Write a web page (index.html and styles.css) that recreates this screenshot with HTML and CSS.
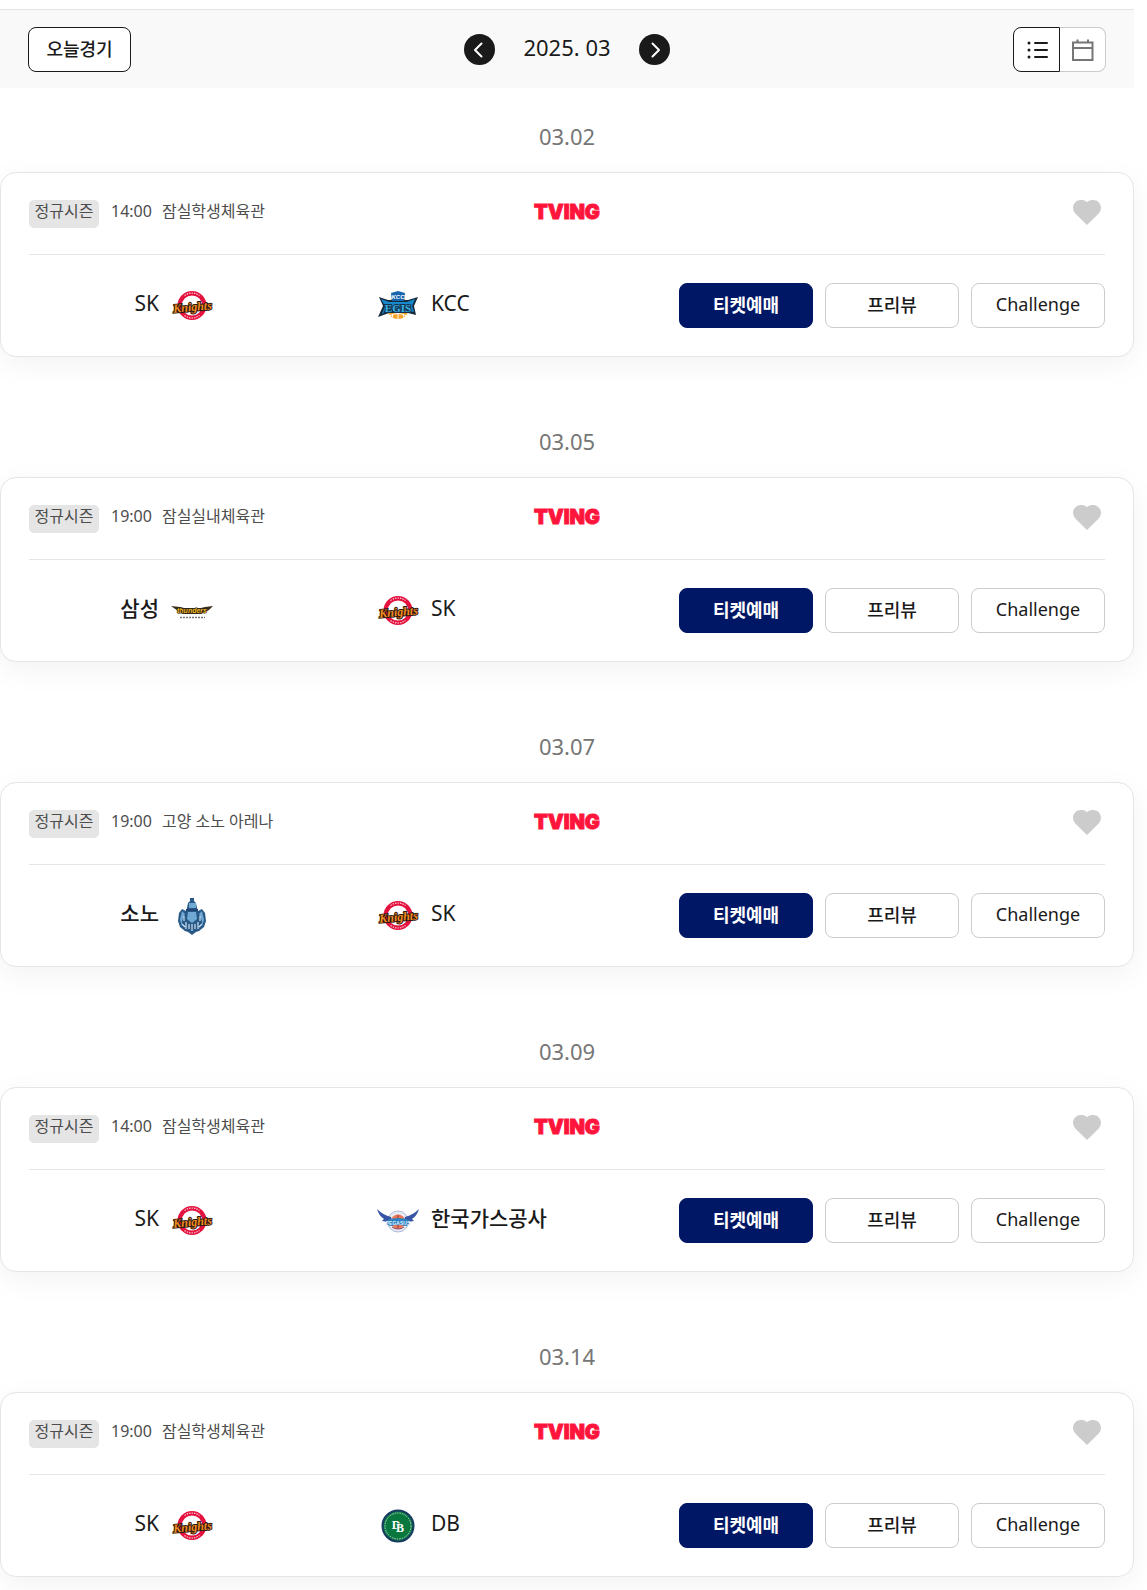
FILE: index.html
```html
<!DOCTYPE html>
<html lang="ko">
<head>
<meta charset="utf-8">
<meta name="viewport" content="width=device-width, initial-scale=1">
<title>경기일정</title>
<link rel="stylesheet" href="styles.css">
</head>
<body>
<svg class="sprite" aria-hidden="true">
  <symbol id="heart" viewBox="0 0 28 25"><path d="M14 25 2.300 13.400A8 8 0 0 1 0 8C0 3.500 3.500 0 8 0c2.500 0 4.500.6 6 2.200C15.500.6 17.500 0 20 0c4.500 0 8 3.500 8 8a8 8 0 0 1-2.300 5.400z" fill="#ccc"/></symbol>
  <symbol id="sk" viewBox="0 0 42 42">
    <circle cx="21" cy="20.500" r="12.300" fill="#fff" stroke="#e4123f" stroke-width="4.400"/>
    <path d="M13.500 10.500q7.500-5 15 0M13.500 30.500q7.500 5 15 0" fill="none" stroke="#fbc3ce" stroke-width="1.200" stroke-dasharray="1.500 1"/>
    <text x="2" y="26" class="knights" transform="rotate(-5 21 21)">Knights</text>
  </symbol>
  <symbol id="kcc" viewBox="0 0 42 42">
    <circle cx="21" cy="23" r="11" fill="#f5a328"/>
    <path d="M12 31q9-5 18 0M21 28v6M16 29l-1 4M26 29l1 4" fill="none" stroke="#fff" stroke-width="1"/>
    <path d="M2 12l9 3h20l10-3-4 9 2 9-8-2H12L1 32l5-11z" fill="#172a3c"/>
    <path d="M4 14l8 3h18l8-3-3 7 2 6-6-1H12l-7 3 3-8z" fill="#1689cc"/>
    <path d="M14 8l7-2 7 2-1 8H15z" fill="#1764af"/>
    <text x="21" y="14" text-anchor="middle" class="kcc-name">KCC</text>
    <text x="21" y="27" text-anchor="middle" class="egis">EGIS</text>
  </symbol>
  <symbol id="samsung" viewBox="0 0 42 42">
    <path d="M0 16l9 1 4 1h17l4-1 8-1-4 4-4 2-4 2H12l-5-3z" fill="#3a2f1d"/>
    <text x="21" y="23" text-anchor="middle" class="thunders">thunders</text>
    <path d="M9 27.500h25" stroke="#777" stroke-width="1.500" stroke-dasharray="2 1"/>
  </symbol>
  <symbol id="sono" viewBox="0 0 42 42">
    <path d="M16 13l1-5 2-2V3h4v3l2 2 1 5 1 3 4-2 3 4 1 8-2 6-5 4-3 1-4 3-4-3-3-1-5-4-2-6 1-8 3-4 4 2z" fill="#285987"/>
    <path d="M18 8h7v5h-7zM17 17h8l1 7-5 4-5-4zM11 16l3 3-3 7v5l-2-6zM31 16l-3 3 3 7v5l2-6z" fill="#71a9d5"/>
    <path d="M13 21v5M29 21v5M11 29l3 3M31 29l-3 3M15 27v7M18 29v5M21 29v7M24 29v5M27 27v7" fill="none" stroke="#cde2f3" stroke-width="1.200"/>
    <path d="M15 15h12" stroke="#1f4672" stroke-width="2"/>
  </symbol>
  <symbol id="pegasus" viewBox="0 0 42 42">
    <circle cx="21" cy="21.500" r="10.500" fill="#e9e9f4" stroke="#aebbd9"/>
    <circle cx="21" cy="21.500" r="7" fill="#ef7652"/>
    <path d="M15 27q6 4 12 0M21 15v13" fill="none" stroke="#873b4a"/>
    <path d="M0 9q6 6 14 8l2 9-7-2 2-2-6-1 2-2q-5-3-7-10zM42 9q-6 6-14 8l-2 9 7-2-2-2 6-1-2-2q5-3 7-10z" fill="#3655a4"/>
    <path d="M10 20q11-4 22 0l-2 6q-9-2-18 0z" fill="#2e82c2"/>
    <text x="21" y="25" text-anchor="middle" class="pegasus-name">PEGASUS</text>
  </symbol>
  <symbol id="db" viewBox="0 0 42 42">
    <circle cx="21" cy="21" r="15.500" fill="#08783f" stroke="#183b62" stroke-width="2"/>
    <circle cx="21" cy="21" r="13" fill="none" stroke="#b9d7c8" stroke-dasharray="1.500 1"/>
    <circle cx="21" cy="21" r="11" fill="#08783f"/>
    <text x="19" y="24" text-anchor="middle" class="db-mark">D</text>
    <text x="23" y="27" text-anchor="middle" class="db-mark">B</text>
  </symbol>
</svg>

<div class="page">
  <header class="toolbar">
    <div><button type="button" class="today">오늘경기</button></div>
    <div class="month">
      <button type="button" class="arrow" aria-label="이전 달"><svg viewBox="0 0 31 31"><path d="M17.500 9.500 11 16l6.500 6.500"/></svg></button>
      <span class="month-label">2025. 03</span>
      <button type="button" class="arrow" aria-label="다음 달"><svg viewBox="0 0 31 31"><path d="m13.500 9.500 6.500 6.500-6.500 6.500"/></svg></button>
    </div>
    <div class="views">
      <button type="button" class="view view-list" aria-label="목록 보기"><svg viewBox="0 0 24 24"><path d="M10 5h12M10 12h12M10 19h12" stroke-width="2"/><path d="M4 5h.01M4 12h.01M4 19h.01" stroke-width="3"/></svg></button>
      <button type="button" class="view view-calendar" aria-label="달력 보기"><svg viewBox="0 0 24 24"><path d="M2 4.500h19.500v17.500H2zM2 10h19.500M6.500 1.500v3M17 1.500v3" stroke-width="2"/></svg></button>
    </div>
  </header>

  <main class="schedule">
    <section class="day">
      <h2 class="date">03.02</h2>
      <article class="card">
        <div class="info">
          <div class="meta"><span class="badge">정규시즌</span><span class="time">14:00</span><span>잠실학생체육관</span></div>
          <span class="tving">TVING</span>
          <button type="button" class="like" aria-label="관심 경기"><svg><use href="#heart"/></svg></button>
        </div>
        <div class="match">
          <div class="teams">
            <div class="team home"><span lang="en">SK</span><svg class="logo"><use href="#sk"/></svg></div>
            <div class="team"><svg class="logo"><use href="#kcc"/></svg><span lang="en">KCC</span></div>
          </div>
          <div class="actions"><button type="button" class="btn primary">티켓예매</button><button type="button" class="btn">프리뷰</button><button type="button" class="btn" lang="en">Challenge</button></div>
        </div>
      </article>
    </section>

    <section class="day">
      <h2 class="date">03.05</h2>
      <article class="card">
        <div class="info">
          <div class="meta"><span class="badge">정규시즌</span><span class="time">19:00</span><span>잠실실내체육관</span></div>
          <span class="tving">TVING</span>
          <button type="button" class="like" aria-label="관심 경기"><svg><use href="#heart"/></svg></button>
        </div>
        <div class="match">
          <div class="teams">
            <div class="team home"><span>삼성</span><svg class="logo"><use href="#samsung"/></svg></div>
            <div class="team"><svg class="logo"><use href="#sk"/></svg><span lang="en">SK</span></div>
          </div>
          <div class="actions"><button type="button" class="btn primary">티켓예매</button><button type="button" class="btn">프리뷰</button><button type="button" class="btn" lang="en">Challenge</button></div>
        </div>
      </article>
    </section>

    <section class="day">
      <h2 class="date">03.07</h2>
      <article class="card">
        <div class="info">
          <div class="meta"><span class="badge">정규시즌</span><span class="time">19:00</span><span>고양 소노 아레나</span></div>
          <span class="tving">TVING</span>
          <button type="button" class="like" aria-label="관심 경기"><svg><use href="#heart"/></svg></button>
        </div>
        <div class="match">
          <div class="teams">
            <div class="team home"><span>소노</span><svg class="logo"><use href="#sono"/></svg></div>
            <div class="team"><svg class="logo"><use href="#sk"/></svg><span lang="en">SK</span></div>
          </div>
          <div class="actions"><button type="button" class="btn primary">티켓예매</button><button type="button" class="btn">프리뷰</button><button type="button" class="btn" lang="en">Challenge</button></div>
        </div>
      </article>
    </section>

    <section class="day">
      <h2 class="date">03.09</h2>
      <article class="card">
        <div class="info">
          <div class="meta"><span class="badge">정규시즌</span><span class="time">14:00</span><span>잠실학생체육관</span></div>
          <span class="tving">TVING</span>
          <button type="button" class="like" aria-label="관심 경기"><svg><use href="#heart"/></svg></button>
        </div>
        <div class="match">
          <div class="teams">
            <div class="team home"><span lang="en">SK</span><svg class="logo"><use href="#sk"/></svg></div>
            <div class="team"><svg class="logo"><use href="#pegasus"/></svg><span>한국가스공사</span></div>
          </div>
          <div class="actions"><button type="button" class="btn primary">티켓예매</button><button type="button" class="btn">프리뷰</button><button type="button" class="btn" lang="en">Challenge</button></div>
        </div>
      </article>
    </section>

    <section class="day">
      <h2 class="date">03.14</h2>
      <article class="card">
        <div class="info">
          <div class="meta"><span class="badge">정규시즌</span><span class="time">19:00</span><span>잠실학생체육관</span></div>
          <span class="tving">TVING</span>
          <button type="button" class="like" aria-label="관심 경기"><svg><use href="#heart"/></svg></button>
        </div>
        <div class="match">
          <div class="teams">
            <div class="team home"><span lang="en">SK</span><svg class="logo"><use href="#sk"/></svg></div>
            <div class="team"><svg class="logo"><use href="#db"/></svg><span lang="en">DB</span></div>
          </div>
          <div class="actions"><button type="button" class="btn primary">티켓예매</button><button type="button" class="btn">프리뷰</button><button type="button" class="btn" lang="en">Challenge</button></div>
        </div>
      </article>
    </section>
  </main>
</div>
</body>
</html>
```
FILE: styles.css
```css
* {
  box-sizing: border-box;
}

body {
  margin: 0;
  background: #fff;
  color: #1a1a1a;
  font-family: "Noto Sans", "Noto Sans CJK KR", sans-serif;
  font-size: 16px;
}

button {
  padding: 0;
  border: 0;
  background: none;
  color: inherit;
  font: inherit;
  cursor: pointer;
}

svg {
  display: block;
}

.sprite {
  display: none;
}

.page {
  padding: 9px 13px 14px 0;
}

/* Toolbar */
.toolbar {
  display: grid;
  grid-template-columns: 1fr auto 1fr;
  align-items: center;
  padding: 17px 28px 16px;
  border-top: 1px solid #e5e5e5;
  background: #f9f9f9;
}

.today {
  width: 103px;
  height: 45px;
  padding-bottom: 4px;
  border: 1px solid #1a1a1a;
  border-radius: 8px;
  background: #fff;
  font-size: 18px;
  font-weight: 500;
}

.month {
  display: flex;
  align-items: center;
  gap: 28px;
}

.month-label {
  padding-bottom: 6px;
  font-size: 22px;
  line-height: 28px;
}

.arrow {
  width: 31px;
  height: 31px;
  border-radius: 50%;
  background: #1a1a1a;
}

.arrow path {
  fill: none;
  stroke: #fff;
  stroke-width: 2;
  stroke-linecap: round;
  stroke-linejoin: round;
}

.views {
  display: flex;
  justify-content: flex-end;
}

.view {
  display: grid;
  place-items: center;
  width: 46px;
  height: 45px;
  border: 1px solid #ccc;
  background: #fff;
}

.view svg {
  width: 24px;
  height: 24px;
  fill: none;
  stroke: currentColor;
}

.view-list {
  width: 47px;
  border-color: #1a1a1a;
  border-radius: 8px 0 0 8px;
  stroke-linecap: round;
}

.view-calendar {
  border-left: 0;
  border-radius: 0 8px 8px 0;
  color: #767676;
}

/* Schedule */
.schedule {
  display: flex;
  flex-direction: column;
  gap: 68px;
  padding-top: 32px;
}

.date {
  margin: 0 0 20px;
  color: #767676;
  font-size: 22px;
  font-weight: 400;
  line-height: 32px;
  text-align: center;
}

.card {
  padding: 27px 28px 28px;
  border: 1px solid #e5e5e5;
  border-radius: 16px;
  background: #fff;
  box-shadow: 0 8px 30px rgba(0, 0, 0, .05);
}

.info {
  display: grid;
  grid-template-columns: 1fr auto 1fr;
  align-items: start;
  padding-bottom: 26px;
  border-bottom: 1px solid #e5e5e5;
}

.meta {
  display: flex;
  align-items: center;
  color: #4d4d4d;
  line-height: 22px;
}

.meta > span {
  padding-bottom: 6px;
}

.badge {
  width: 70px;
  height: 28px;
  border-radius: 5px;
  background: #e5e5e5;
  text-align: center;
}

.time {
  margin: 0 10px 0 12px;
}

.tving {
  color: #ff153c;
  font-family: Inter, sans-serif;
  font-size: 20px;
  font-weight: 900;
  line-height: 24px;
  -webkit-text-stroke: 1px #ff153c;
}

.like {
  justify-self: end;
  margin-right: 4px;
}

.like svg {
  width: 28px;
  height: 25px;
}

.match {
  display: flex;
  align-items: center;
  justify-content: space-between;
  gap: 24px;
  padding-top: 28px;
}

.teams {
  display: grid;
  flex: 0 1 532px;
  grid-template-columns: 1fr 1fr;
  column-gap: 164px;
}

.team {
  display: flex;
  align-items: center;
  gap: 12px;
  font-size: 21px;
  font-weight: 500;
  line-height: 28px;
  white-space: nowrap;
}

.team span {
  padding-bottom: 6px;
}

.home {
  justify-content: flex-end;
}

.logo {
  flex: none;
  width: 42px;
  height: 42px;
}

.actions {
  display: flex;
  gap: 12px;
}

.btn {
  width: 134px;
  height: 45px;
  padding-bottom: 4px;
  border: 1px solid #ccc;
  border-radius: 8px;
  background: #fff;
  font-size: 18px;
  font-weight: 500;
}

.primary {
  border-color: #001766;
  background: #001766;
  color: #fff;
  font-weight: 700;
}

.team [lang="en"],
.btn[lang="en"] {
  font-weight: 400;
}

/* Lettering inside the team emblems */
.knights {
  fill: #f28c1e;
  stroke: #2b1712;
  stroke-width: 2px;
  paint-order: stroke;
  font: italic bold 12px "Liberation Serif", serif;
}

.kcc-name {
  fill: #fff;
  font: italic bold 6px "Liberation Sans", sans-serif;
}

.egis {
  fill: #38b2e8;
  stroke: #15344d;
  stroke-width: 2px;
  paint-order: stroke;
  font: bold 11px "Liberation Serif", serif;
}

.thunders {
  fill: #f2b91d;
  stroke: #262019;
  stroke-width: 1px;
  paint-order: stroke;
  font: italic bold 7px "Liberation Sans", sans-serif;
}

.pegasus-name {
  fill: #d9effb;
  font: bold 5px "Liberation Sans", sans-serif;
}

.db-mark {
  fill: #fff;
  stroke: #08783f;
  stroke-width: 1px;
  paint-order: stroke;
  font: bold 12px "Liberation Serif", serif;
}
```
